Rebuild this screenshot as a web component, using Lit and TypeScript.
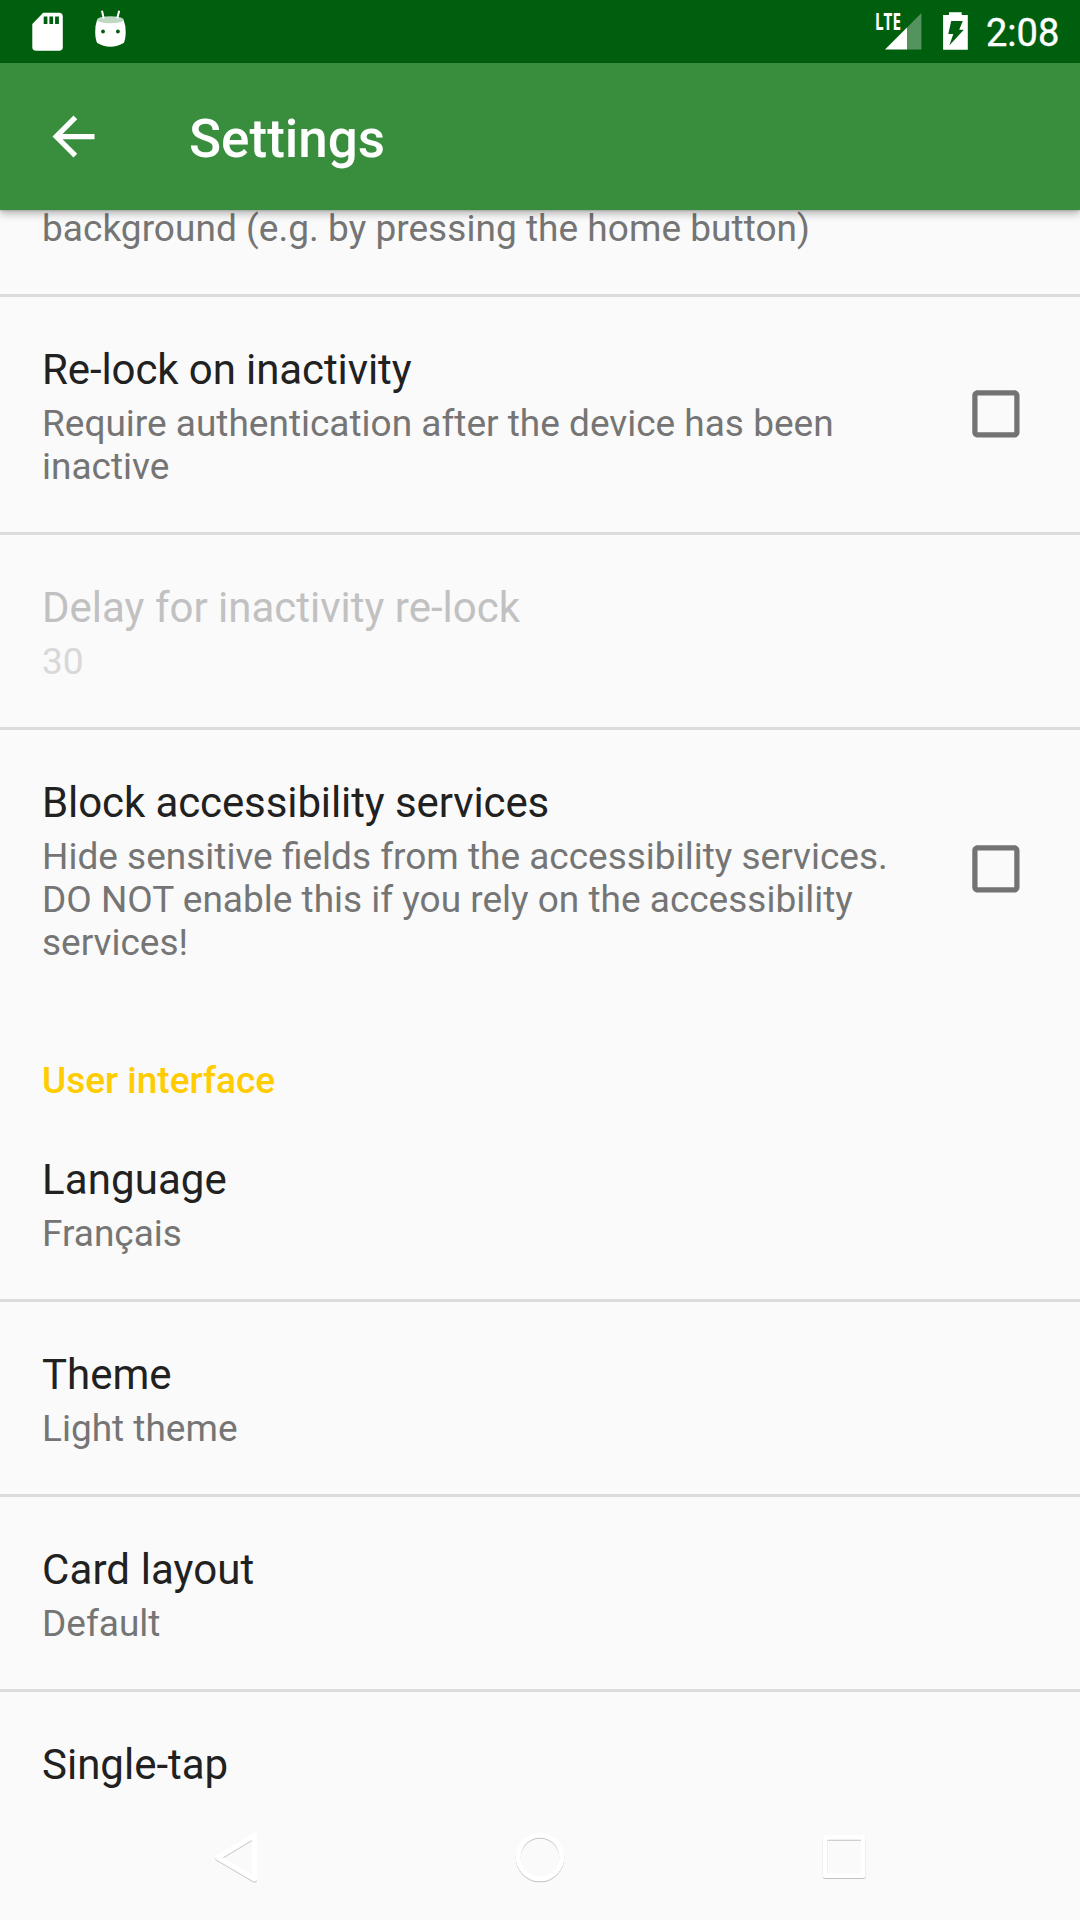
import { LitElement, html, css, svg, nothing } from "lit";
import { customElement, property } from "lit/decorators.js";

@customElement("check-box")
class CheckBox extends LitElement {
  static styles = css`
    :host { display: block; width: 63px; height: 63px; }
    svg { display: block; width: 63px; height: 63px; }
  `;
  render() {
    return html`<svg viewBox="-.15 -.15 24 24" fill="#737373">
      <path d="M19 5v14H5V5h14m0-2H5c-1.1 0-2 .9-2 2v14c0 1.1.9 2 2 2h14c1.1 0 2-.9 2-2V5c0-1.1-.9-2-2-2z"/>
    </svg>`;
  }
}

@customElement("status-bar")
class StatusBar extends LitElement {
  static styles = css`
    :host { display: flex; height: 63px; background: #005f0f; justify-content: space-between; color: #fff; }
    svg { display: block; }
    .side { display: flex; align-items: flex-start; }
    .clock {
      font: 400 38px/44px Roboto, "Liberation Sans", sans-serif; padding: 11px 0 0; width: 94px;
      white-space: nowrap; -webkit-text-stroke: .4px #fff;
    }
    .lte { font: 700 23px "Open Sans", Roboto, sans-serif; }
  `;
  render() {
    return html`
      <div class="side">
        <svg width="140" height="63" viewBox="0 0 140 63" fill="#fff">
          <path fill-rule="evenodd" d="M43.2 12.7H59a3.8 3.8 0 0 1 3.8 3.8V47a3.8 3.8 0 0 1-3.8 3.8H36.1a3.8 3.8 0 0 1-3.8-3.8V24zM43.7 16.5V24h3.7v-7.5zM49.4 16.5V24h3.7v-7.5zM55.1 16.5V24h3.8v-7.5z"/>
          <path d="M97 20q13.300 6 26.600 0q2.100 5 2.100 12t-2 11q-6.200 3.700-13.300 3.700T97.200 43q-2-4-2-11t1.800-12z"/>
          <ellipse cx="110.300" cy="19.700" rx="13.300" ry="3.500" fill="#bfd7c3"/>
          <path d="M102 10.800l1.700 7.600M119.200 10.800l-2 7.600" stroke="#fff" stroke-width="2"/>
          <circle cx="103" cy="31.500" r="1.900" fill="#005f0f"/>
          <circle cx="117.900" cy="31.500" r="1.900" fill="#005f0f"/>
        </svg>
      </div>
      <div class="side">
        <svg width="114" height="63" viewBox="872 0 114 63" fill="#fff">
          <text class="lte" x="875" y="29.600" textLength="26" lengthAdjust="spacingAndGlyphs">LTE</text>
          <path d="M907 27.500L921.400 13v36.500H907z" opacity=".33"/>
          <path d="M885 49.500L907 27.500v22z"/>
          <path fill-rule="evenodd" d="M949 12.300h12.700V15h6.100v34.700h-24.700V15h5.900zM951.200 21L948.300 34h5L949.300 45.600L963.800 29.700h-4.600L962.800 21z"/>
        </svg>
        <div class="clock">2:08</div>
      </div>`;
  }
}

@customElement("app-bar")
class AppBar extends LitElement {
  static styles = css`
    :host {
      display: flex; height: 147px; box-sizing: border-box; align-items: center; background: #388e3c; color: #fff;
      padding-left: 42px; gap: 84px; position: relative; z-index: 1;
      box-shadow: 0 4px 8px rgba(0, 0, 0, .26), 0 1px 2px rgba(0, 0, 0, .16);
    }
    svg { width: 63px; height: 63px; display: block; }
    .title { font: 500 53px/62px Roboto, "Liberation Sans", sans-serif; padding-top: 4px; }
  `;
  render() {
    return html`
      <svg viewBox="0 0 24 24" fill="#fff"><path d="M20 11H7.830l5.590-5.590L12 4l-8 8 8 8 1.410-1.410L7.830 13H20v-2z"/></svg>
      <div class="title">Settings</div>`;
  }
}

@customElement("preference-row")
class PreferenceRow extends LitElement {
  @property() heading = "";
  @property({ attribute: false }) lines: string[] = [];
  @property({ type: Boolean }) checkable = false;
  static styles = css`
    :host { display: flex; align-items: center; justify-content: space-between; padding: 0 53px 0 42px; }
    :host([divided]) { border-bottom: 3px solid #dcdcdc; }
    .texts { padding: 48px 0 44px; display: flex; flex-direction: column; gap: 8px; }
    :host([continued]) .texts { padding-top: 0; }
    check-box { margin-bottom: 1.200px; }
    .heading { font-size: 42px; line-height: 49px; color: #212121; white-space: nowrap; letter-spacing: var(--tracking, 0); }
    .summary { font-size: 37px; line-height: 43px; color: #757575; white-space: nowrap; }
    :host([continued]) .summary { letter-spacing: .04px; }
    :host([disabled]) .heading { color: #c1c1c1; }
    :host([disabled]) .summary { color: #d8d8d8; }
  `;
  render() {
    return html`
      <div class="texts">
        ${this.heading ? html`<div class="heading">${this.heading}</div>` : nothing}
        ${this.lines.length
          ? html`<div class="summary">${this.lines.map((l) => html`<div>${l}</div>`)}</div>`
          : nothing}
      </div>
      ${this.checkable ? html`<check-box></check-box>` : nothing}`;
  }
}

@customElement("nav-bar")
class NavBar extends LitElement {
  static styles = css`
    :host { display: block; height: 126px; background: #fafafa; }
    svg { display: block; }
    .keys { filter: drop-shadow(0 1.800px .7px rgba(0, 0, 0, .22)); }
  `;
  render() {
    return html`<svg width="1080" height="126" viewBox="0 1794 1080 126" fill="none" stroke="#fff" stroke-width="5" stroke-linejoin="round">
      ${svg`<g class="keys">
        <path d="M217.800 1857.500L254.500 1835.500v43.500z"/>
        <circle cx="540" cy="1857" r="21.800"/>
        <rect x="825" y="1837.500" width="38.300" height="38.300" stroke-width="4.600"/>
      </g>`}
    </svg>`;
  }
}

@customElement("app-root")
class AppRoot extends LitElement {
  static styles = css`
    :host {
      display: flex; flex-direction: column; width: 1080px; height: 1920px; overflow: hidden;
      background: #fafafa; font-family: Roboto, "Liberation Sans", sans-serif;
    }
    .list { flex: 1; min-height: 0; overflow: hidden; }
    .scrolled { margin-top: -3px; }
    .tight { --tracking: -.1px; }
    .loose { --tracking: .1px; }
    .category { font-size: 37px; font-weight: 500; line-height: 43px; color: #ffcc00; padding: 51px 42px 5px; }
  `;
  render() {
    return html`
      <status-bar></status-bar>
      <app-bar></app-bar>
      <div class="list">
        <div class="scrolled">
          <preference-row continued divided .lines=${["background (e.g. by pressing the home button)"]}></preference-row>
          <preference-row class="tight" divided checkable heading="Re-lock on inactivity"
            .lines=${["Require authentication after the device has been", "inactive"]}></preference-row>
          <preference-row divided disabled heading="Delay for inactivity re-lock" .lines=${["30"]}></preference-row>
          <preference-row class="tight" checkable heading="Block accessibility services"
            .lines=${["Hide sensitive fields from the accessibility services.", "DO NOT enable this if you rely on the accessibility", "services!"]}></preference-row>
          <div class="category">User interface</div>
          <preference-row class="loose" divided heading="Language" .lines=${["Français"]}></preference-row>
          <preference-row divided heading="Theme" .lines=${["Light theme"]}></preference-row>
          <preference-row class="loose" divided heading="Card layout" .lines=${["Default"]}></preference-row>
          <preference-row heading="Single-tap"></preference-row>
        </div>
      </div>
      <nav-bar></nav-bar>`;
  }
}
